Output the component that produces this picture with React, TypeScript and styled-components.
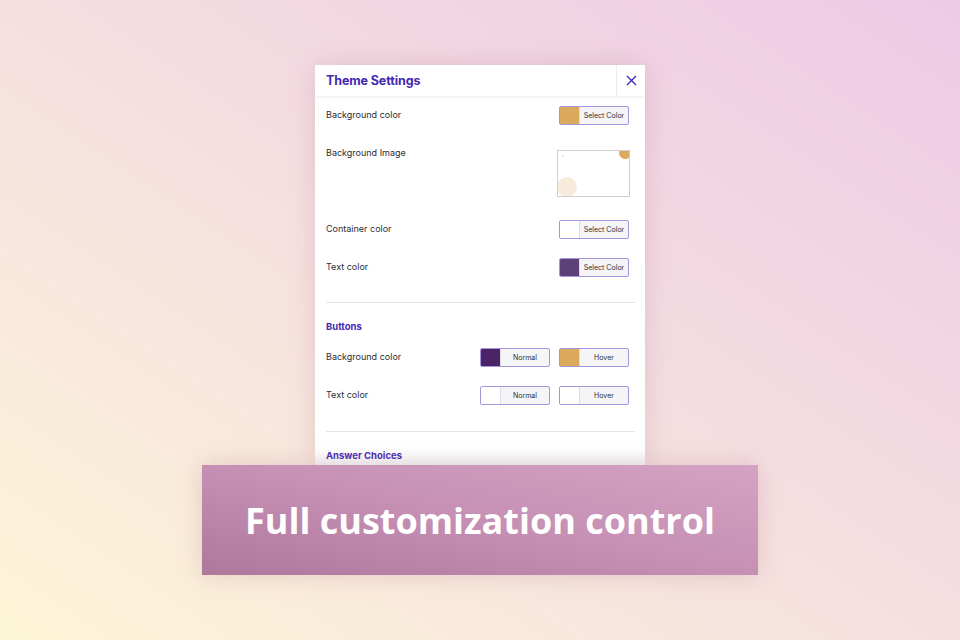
import React from 'react';
import styled, { createGlobalStyle } from 'styled-components';

const colors = {
    purple: '#4428b4',
    text: '#2d2d33',
    control: '#a496dc',
    tan: '#dcaa5c',
    plum: '#4a2466',
    grape: '#5e4078',
    white: '#ffffff',
};

const GlobalStyle = createGlobalStyle`
    html, body {
        margin: 0;
        padding: 0;
    }
    body {
        font-family: Inter, "Liberation Sans", sans-serif;
    }
`;

interface SwatchProps {
    color: string;
    label: string;
}

const ColorControl = ({ color, label }: SwatchProps) => (
    <Control>
        <Swatch $color={color} />
        <ControlLabel>{label}</ControlLabel>
    </Control>
);

const CloseIcon = () => (
    <svg width="11" height="11" viewBox="0 0 11 11">
        <path d="M1 1 L10 10 M10 1 L1 10" stroke={colors.purple} strokeWidth="1.4" fill="none" />
    </svg>
);

const App = () => {
    return (
        <>
            <GlobalStyle />
            <Page>
                <Panel>
                    <Header>
                        <Title>Theme Settings</Title>
                        <CloseButton>
                            <CloseIcon />
                        </CloseButton>
                    </Header>
                    <Body>
                        <Row>
                            <Label>Background color</Label>
                            <ColorControl color={colors.tan} label="Select Color" />
                        </Row>
                        <ImageRow>
                            <ImageLabel>Background Image</ImageLabel>
                            <Thumbnail>
                                <svg width="71" height="45" viewBox="0 0 71 45">
                                    <circle cx="67" cy="2" r="6" fill={colors.tan} />
                                    <circle cx="9" cy="36" r="10" fill="#f7ebdc" />
                                    <circle cx="5" cy="5" r="1" fill="#f0d6d6" />
                                </svg>
                            </Thumbnail>
                        </ImageRow>
                        <Row>
                            <Label>Container color</Label>
                            <ColorControl color={colors.white} label="Select Color" />
                        </Row>
                        <Row>
                            <Label>Text color</Label>
                            <ColorControl color={colors.grape} label="Select Color" />
                        </Row>
                        <Divider />
                        <SectionTitle>Buttons</SectionTitle>
                        <Row $offset={5}>
                            <Label>Background color</Label>
                            <ControlGroup>
                                <ColorControl color={colors.plum} label="Normal" />
                                <ColorControl color={colors.tan} label="Hover" />
                            </ControlGroup>
                        </Row>
                        <Row>
                            <Label>Text color</Label>
                            <ControlGroup>
                                <ColorControl color={colors.white} label="Normal" />
                                <ColorControl color={colors.white} label="Hover" />
                            </ControlGroup>
                        </Row>
                        <Divider $gap={17} />
                        <SectionTitle>Answer Choices</SectionTitle>
                    </Body>
                </Panel>
                <Banner>
                    <BannerText>Full customization control</BannerText>
                </Banner>
            </Page>
        </>
    );
};

const Page = styled.div`
    width: 960px;
    height: 640px;
    box-sizing: border-box;
    padding-top: 65px;
    display: flex;
    flex-direction: column;
    align-items: center;
    overflow: hidden;
    background: linear-gradient(to top right, #fdf5d7 0%, #f5dfe0 50%, #eecae5 100%);
`;

const Panel = styled.div`
    width: 330px;
    height: 400px;
    background: ${colors.white};
    box-shadow: 0 0 24px rgba(170, 110, 140, 0.25);
    display: flex;
    flex-direction: column;
    overflow: hidden;
`;

const Header = styled.div`
    height: 31px;
    flex-shrink: 0;
    display: flex;
    align-items: stretch;
    justify-content: space-between;
    box-shadow: 0 1px 3px rgba(0, 0, 0, 0.08);
    position: relative;
    z-index: 1;
`;

const Title = styled.div`
    padding-left: 11px;
    display: flex;
    align-items: center;
    font-size: 12.5px;
    font-weight: 700;
    color: ${colors.purple};
    letter-spacing: -0.1px;
`;

const CloseButton = styled.div`
    width: 28px;
    display: flex;
    align-items: center;
    justify-content: center;
    border-left: 1px solid #ececf0;
`;

const Body = styled.div`
    padding: 0 10px 0 11px;
    display: flex;
    flex-direction: column;
    background: linear-gradient(to bottom, #fff 0, #fff 355px, #f1f1f3 370px);
    flex: 1;
`;

const Row = styled.div<{ $offset?: number }>`
    height: 38px;
    margin-top: ${({ $offset }) => $offset ?? 0}px;
    padding-right: 6px;
    display: flex;
    align-items: center;
    justify-content: space-between;
`;

const ImageRow = styled.div`
    padding: 16px 5px 13px 0;
    display: flex;
    align-items: flex-start;
    justify-content: space-between;
`;

const Label = styled.div`
    font-size: 9px;
    line-height: 12px;
    color: ${colors.text};
`;

const ImageLabel = styled(Label)`
    margin-top: -3px;
`;

const ControlGroup = styled.div`
    display: flex;
    gap: 9px;
`;

const Control = styled.div`
    width: 70px;
    height: 19px;
    box-sizing: border-box;
    border: 1px solid ${colors.control};
    border-radius: 2px;
    display: flex;
    overflow: hidden;
    background: #f5f5f8;
`;

const Swatch = styled.div<{ $color: string }>`
    width: 19px;
    flex-shrink: 0;
    background: ${({ $color }) => $color};
    border-right: 1px solid #dcdce2;
`;

const ControlLabel = styled.div`
    flex: 1;
    display: flex;
    align-items: center;
    justify-content: center;
    font-size: 7px;
    color: ${colors.text};
`;

const Thumbnail = styled.div`
    width: 73px;
    height: 47px;
    box-sizing: border-box;
    border: 1px solid #cfcfd4;
    background: ${colors.white};
    & svg {
        display: block;
    }
`;

const Divider = styled.div<{ $gap?: number }>`
    height: 1px;
    background: #e4e4e8;
    margin-top: ${({ $gap }) => $gap ?? 16}px;
`;

const SectionTitle = styled.div`
    margin-top: 18px;
    font-size: 9.5px;
    line-height: 12px;
    font-weight: 700;
    color: ${colors.purple};
`;

const Banner = styled.div`
    width: 556px;
    height: 110px;
    flex-shrink: 0;
    display: flex;
    align-items: center;
    justify-content: center;
    background: linear-gradient(to top right, #ae789c 0%, #c590b4 50%, #d4a3c3 100%);
    box-shadow: 0 0 22px rgba(190, 140, 150, 0.35);
`;

const BannerText = styled.div`
    font-family: "Open Sans", "Liberation Sans", sans-serif;
    font-size: 36px;
    font-weight: 700;
    color: ${colors.white};
`;

export default App;
